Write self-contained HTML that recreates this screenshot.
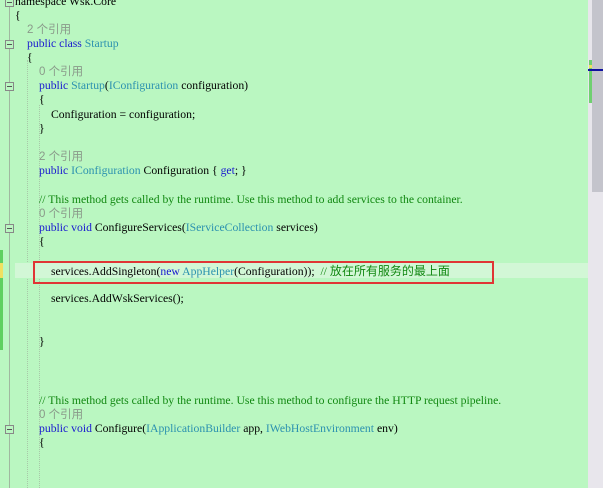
<!DOCTYPE html>
<html><head><meta charset="utf-8"><style>
body{margin:0;width:603px;height:488px;overflow:hidden;background:#baf7c1;position:relative;font-family:"Liberation Serif","Noto Serif CJK SC",serif;font-size:11.7px;color:#000}
.l{position:absolute;white-space:pre;height:14px;line-height:14px}
.k{color:#1818d0}.t{color:#2b91af}.c{color:#118811}.h{color:#8a9a8a;font-family:"Liberation Sans","Noto Sans CJK SC",sans-serif;font-size:11.5px}
.cj{font-family:"Noto Sans CJK SC",sans-serif;font-size:12px}
.box{position:absolute;width:7px;height:7px;border:1px solid #888;background:#baf7c1;left:5px}
.box:after{content:"";position:absolute;left:1px;top:3px;width:5px;height:1px;background:#555}
</style></head><body>
<div style="position:absolute;left:9px;top:0;width:1px;height:488px;background:#a0b8a0"></div>
<div style="position:absolute;left:27px;top:60px;width:0;height:428px;border-left:1px dotted #a8c8a8"></div>
<div style="position:absolute;left:39px;top:105px;width:0;height:383px;border-left:1px dotted #a8c8a8"></div>
<div style="position:absolute;left:0;top:250px;width:3px;height:100px;background:#5fd060"></div>
<div style="position:absolute;left:0;top:263px;width:3px;height:15px;background:#f0e060"></div>
<div style="position:absolute;left:15px;top:263px;width:573px;height:15px;background:#d2f7d6"></div>
<div style="position:absolute;left:33px;top:261px;width:457px;height:19px;border:2px solid #e03535"></div>
<div class="box" style="top:-2px"></div>
<div class="box" style="top:40px"></div>
<div class="box" style="top:82px"></div>
<div class="box" style="top:224px"></div>
<div class="box" style="top:425px"></div>
<div class="l" style="left:15px;top:-5px">namespace Wsk.Core</div>
<div class="l" style="left:15px;top:9px">{</div>
<div class="l h" style="left:27px;top:23px">2 个引用</div>
<div class="l" style="left:27px;top:37px"><span class="k">public class</span> <span class="t">Startup</span></div>
<div class="l" style="left:27px;top:51px">{</div>
<div class="l h" style="left:39px;top:65px">0 个引用</div>
<div class="l" style="left:39px;top:79px"><span class="k">public</span> <span class="t">Startup</span>(<span class="t">IConfiguration</span> configuration)</div>
<div class="l" style="left:39px;top:93px">{</div>
<div class="l" style="left:51px;top:108px">Configuration = configuration;</div>
<div class="l" style="left:39px;top:122px">}</div>
<div class="l h" style="left:39px;top:150px">2 个引用</div>
<div class="l" style="left:39px;top:164px"><span class="k">public</span> <span class="t">IConfiguration</span> Configuration { <span class="k">get</span>; }</div>
<div class="l c" style="left:39px;top:193px">// This method gets called by the runtime. Use this method to add services to the container.</div>
<div class="l h" style="left:39px;top:207px">0 个引用</div>
<div class="l" style="left:39px;top:221px"><span class="k">public void</span> ConfigureServices(<span class="t">IServiceCollection</span> services)</div>
<div class="l" style="left:39px;top:235px">{</div>
<div class="l" style="left:51px;top:264px">services.AddSingleton(<span class="k">new</span> <span class="t">AppHelper</span>(Configuration));  <span class="c">// <span class="cj">放在所有服务的最上面</span></span></div>
<div class="l" style="left:51px;top:292px">services.AddWskServices();</div>
<div class="l" style="left:39px;top:335px">}</div>
<div class="l c" style="left:39px;top:394px">// This method gets called by the runtime. Use this method to configure the HTTP request pipeline.</div>
<div class="l h" style="left:39px;top:408px">0 个引用</div>
<div class="l" style="left:39px;top:422px"><span class="k">public void</span> Configure(<span class="t">IApplicationBuilder</span> app, <span class="t">IWebHostEnvironment</span> env)</div>
<div class="l" style="left:39px;top:436px">{</div>
<div style="position:absolute;left:588px;top:0;width:15px;height:488px;background:#e8e6ec"></div>
<div style="position:absolute;left:592px;top:0;width:11px;height:192px;background:#c4c4cc"></div>
<div style="position:absolute;left:589px;top:60px;width:3px;height:43px;background:#6fd070"></div>
<div style="position:absolute;left:589px;top:65px;width:3px;height:3px;background:#f0e060"></div>
<div style="position:absolute;left:588px;top:69px;width:15px;height:2px;background:#1010a0"></div>
</body></html>
